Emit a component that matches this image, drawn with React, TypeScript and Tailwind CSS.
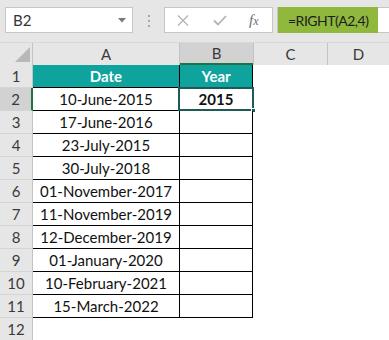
import React from "react";

const dates = [
  "10-June-2015",
  "17-June-2016",
  "23-July-2015",
  "30-July-2018",
  "01-November-2017",
  "11-November-2019",
  "12-December-2019",
  "01-January-2020",
  "10-February-2021",
  "15-March-2022",
];

function RowHead({ n, selected }: { n: number; selected?: boolean }) {
  return (
    <div
      className={
        "w-[33px] h-full shrink-0 flex items-center justify-center text-[15px] text-[#3a3a3a] border-b border-[#d4d4d4] " +
        (selected
          ? "bg-[#d2d2d2] border-r-2 border-r-[#217346]"
          : "bg-[#e6e6e6] border-r border-r-[#c4c4c4]")
      }
    >
      {n}
    </div>
  );
}

export default function App() {
  return (
    <div
      className="w-[389px] h-[340px] overflow-hidden bg-white text-[#111]"
      style={{ fontFamily: "Lato, 'Open Sans', sans-serif" }}
    >
      {/* Formula bar area */}
      <div className="h-[42px] bg-[#e6e6e6] flex items-start pt-[7px]">
        <div className="ml-[5px] w-[128px] h-[26px] bg-white border border-[#c6c6c6] flex items-center justify-between pl-[7px] pr-[6px]">
          <span className="text-[15px] text-[#333]">B2</span>
          <svg width="8" height="5" viewBox="0 0 8 5">
            <polygon points="0,0 8,0 4,4.5" fill="#7a7a7a" />
          </svg>
        </div>
        <div className="ml-[15px] mt-[8px] flex flex-col gap-[3px]">
          <div className="w-[2px] h-[2px] bg-[#a8a8a8]" />
          <div className="w-[2px] h-[2px] bg-[#a8a8a8]" />
          <div className="w-[2px] h-[2px] bg-[#a8a8a8]" />
        </div>
        <div className="ml-[14px] w-[109px] h-[26px] bg-white border border-[#c6c6c6] flex items-center">
          <svg className="ml-[12px]" width="12" height="11" viewBox="0 0 12 11">
            <path d="M1 0.5 L11 10.5 M11 0.5 L1 10.5" stroke="#b4b4b4" strokeWidth="1.3" />
          </svg>
          <svg className="ml-[24px]" width="14" height="11" viewBox="0 0 14 11">
            <path d="M1 5.5 L5 9.5 L13 1" stroke="#b4b4b4" strokeWidth="1.8" fill="none" />
          </svg>
          <span
            className="ml-[22px] text-[15px] italic text-[#6e6e6e] leading-none"
            style={{ fontFamily: "'Liberation Serif', serif" }}
          >
            f<span className="text-[12px]">x</span>
          </span>
        </div>
        <div className="ml-[4px] flex-1 h-[26px] bg-white border-y border-l border-[#c6c6c6] flex">
          <div className="w-[100px] -my-px h-[26px] bg-[#8fb83d] flex items-center pl-[10px] text-[14px] tracking-[-0.5px] text-[#1d1d1d] whitespace-nowrap">
            =RIGHT(A2,4)
          </div>
        </div>
      </div>

      {/* Column headers */}
      <div className="h-[23px] flex bg-[#e6e6e6] text-[15px] text-[#3a3a3a] border-t border-[#d8d8d8]">
        <div className="w-[33px] shrink-0 relative border-r border-[#c4c4c4]">
          <svg className="absolute left-[15px] top-[4px]" width="15" height="15" viewBox="0 0 15 15">
            <polygon points="15,0 15,15 0,15" fill="#b8b8b8" />
          </svg>
        </div>
        <div className="w-[147px] shrink-0 flex items-center justify-center border-r border-[#c4c4c4]">A</div>
        <div className="w-[73px] shrink-0 flex items-center justify-center bg-[#d2d2d2] border-b-2 border-[#217346]">B</div>
        <div className="w-[75px] shrink-0 flex items-center justify-center border-r border-l border-[#c4c4c4]">C</div>
        <div className="flex-1 flex items-center justify-center">D</div>
      </div>

      {/* Row 1 */}
      <div className="h-[23px] flex">
        <RowHead n={1} />
        <div className="w-[147px] shrink-0 bg-[#0fa39e] border-b border-r border-black flex items-center justify-center text-white font-bold text-[15px]">
          Date
        </div>
        <div className="w-[73px] shrink-0 bg-[#0fa39e] border-b border-r border-black flex items-center justify-center text-white font-bold text-[15px]">
          Year
        </div>
      </div>

      {dates.map((d, i) => (
        <div key={d} className="h-[23px] flex">
          <RowHead n={i + 2} selected={i === 0} />
          <div className="w-[147px] shrink-0 border-b border-r border-black flex items-center justify-center text-[15px] text-[#111]">
            {d}
          </div>
          <div className="w-[73px] shrink-0 border-b border-r border-black relative flex items-center justify-center text-[15px] font-bold text-[#111]">
            {i === 0 ? "2015" : ""}
            {i === 0 && (
              <>
                <div className="absolute -left-[2px] -top-[1px] -right-[2px] -bottom-[1px] border-[2px] border-[#1d5a58]" />
                <div className="absolute -right-[4px] -bottom-[3px] w-[5px] h-[5px] bg-[#1d5a58] border border-white" />
              </>
            )}
          </div>
        </div>
      ))}

      <div className="h-[23px] flex">
        <RowHead n={12} />
      </div>
    </div>
  );
}
